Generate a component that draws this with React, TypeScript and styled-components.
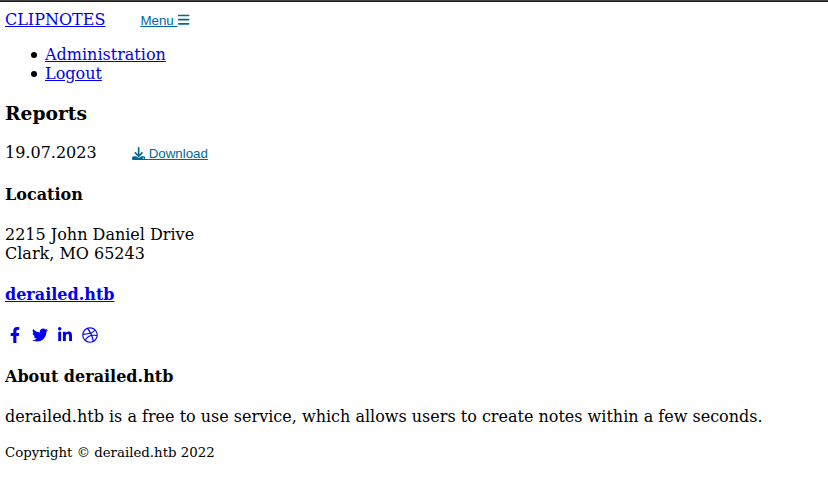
import React from "react";
import styled, { createGlobalStyle } from "styled-components";
import { FaBars, FaDownload, FaTwitter, FaLinkedinIn, FaDribbble } from "react-icons/fa6";
import { FaFacebookF } from "react-icons/fa";

const GlobalStyle = createGlobalStyle`
  html, body { margin: 0; background: #fff; }
  body { font: 16px/19px "DejaVu Serif", serif; color: #000; }
`;

const Page = styled.div`
  box-sizing: border-box;
  height: 486px;
  overflow: hidden;
  padding: 0 5px;
`;

const TopEdge = styled.div`
  height: 1px;
  margin: 0 -5px 8px;
  background: #444243;
  border-bottom: 1px solid #1b181c;
`;

const Link = styled.a`
  color: #0000ee;
  text-decoration: underline;
`;

const Row = styled.div`
  display: flex;
  align-items: center;
  height: 19px;
  gap: 35px;
`;

const ReportRow = styled(Row)`
  padding-bottom: 1px;
`;

const Action = styled.button`
  display: flex;
  align-items: center;
  margin: 2px 0 0;
  padding: 0;
  border: 0;
  background: none;
  color: #006999;
  font: 13.333px/15px "Liberation Sans", sans-serif;
  text-decoration: underline;
  white-space: pre;
`;

const MenuIcon = styled(FaBars)`
  margin-bottom: 2px;
`;

const NavList = styled.ul`
  margin: 16px 0;
  padding-left: 40px;
  list-style: none;
`;

const NavItem = styled.li`
  display: flex;
  align-items: center;

  &::before {
    content: "";
    width: 6px;
    height: 6px;
    margin: 1px 8px 0 -14px;
    border-radius: 50%;
    background: #000;
  }
`;

const Title = styled.h3`
  margin: 19px 0;
  font-size: 18.72px;
  line-height: 22px;
`;

const Heading = styled.h4`
  margin: 22px 0 21px;
  font-size: 16px;
  line-height: 19px;
`;

const Text = styled.p`
  margin: 0;
`;

const Socials = styled.div`
  display: flex;
  align-items: center;
  height: 20px;
  gap: 5px;
`;

const SocialLink = styled.a`
  display: flex;
  justify-content: center;
  width: 20px;
  color: #0000ee;
`;

const Copyright = styled.small`
  display: block;
  margin-top: 17px;
  font-size: 13.333px;
`;

export default function App() {
  return (
    <Page>
      <GlobalStyle />
      <TopEdge />
      <Row>
        <Link href="#">CLIPNOTES</Link>
        <Action>Menu <MenuIcon size={13.333} /></Action>
      </Row>
      <NavList>
        <NavItem><Link href="#">Administration</Link></NavItem>
        <NavItem><Link href="#">Logout</Link></NavItem>
      </NavList>
      <Title>Reports</Title>
      <ReportRow>
        <span>19.07.2023</span>
        <Action><FaDownload size={13.333} /> Download</Action>
      </ReportRow>
      <Heading>Location</Heading>
      <Text>2215 John Daniel Drive<br />Clark, MO 65243</Text>
      <Heading><Link href="#">derailed.htb</Link></Heading>
      <Socials>
        <SocialLink href="#"><FaFacebookF /></SocialLink>
        <SocialLink href="#"><FaTwitter /></SocialLink>
        <SocialLink href="#"><FaLinkedinIn /></SocialLink>
        <SocialLink href="#"><FaDribbble /></SocialLink>
      </Socials>
      <Heading>About derailed.htb</Heading>
      <Text>derailed.htb is a free to use service, which allows users to create notes within a few seconds.</Text>
      <Copyright>Copyright © derailed.htb 2022</Copyright>
    </Page>
  );
}
